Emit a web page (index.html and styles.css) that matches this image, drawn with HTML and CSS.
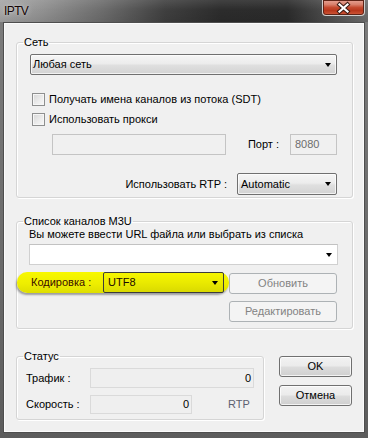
FILE: index.html
```html
<!DOCTYPE html>
<html>
<head>
<meta charset="utf-8">
<title>IPTV</title>
<link rel="stylesheet" href="styles.css">
</head>
<body>
<div class="window">
  <div class="titlebar">
    <span class="title">IPTV</span>
    <div class="close">
      <svg width="41" height="14" viewBox="0 0 41 14">
        <path d="M16.5 3.5 L24.5 10.5 M24.5 3.5 L16.5 10.5" stroke="#3b1b14" stroke-width="4.2" stroke-linecap="square" fill="none"/>
        <path d="M16.5 3.5 L24.5 10.5 M24.5 3.5 L16.5 10.5" stroke="#ffffff" stroke-width="2.2" stroke-linecap="square" fill="none"/>
      </svg>
    </div>
  </div>
  <div class="client">
    <fieldset class="group net">
      <legend>Сеть</legend>
      <div class="combo net-combo"><span>Любая сеть</span><i class="arrow"></i></div>
      <label class="check first"><span class="box"></span>Получать имена каналов из потока (SDT)</label>
      <label class="check second"><span class="box"></span>Использовать прокси</label>
      <div class="proxy-row">
        <div class="field proxy"></div>
        <span class="port-label">Порт :</span>
        <div class="field port">8080</div>
      </div>
      <div class="rtp-row">
        <span>Использовать RTP :</span>
        <div class="combo rtp"><span>Automatic</span><i class="arrow"></i></div>
      </div>
    </fieldset>

    <fieldset class="group m3u">
      <legend>Список каналов M3U</legend>
      <div class="info">Вы можете ввести URL файла или выбрать из списка</div>
      <div class="url-combo"><i class="arrow"></i></div>
      <div class="m3u-grid">
        <div class="highlight">
          <span class="enc-label">Кодировка :</span>
          <div class="combo enc"><span>UTF8</span><i class="arrow"></i></div>
        </div>
        <div class="button disabled refresh">Обновить</div>
        <div class="button disabled edit">Редактировать</div>
      </div>
    </fieldset>

    <div class="bottom">
      <fieldset class="group status">
        <legend>Статус</legend>
        <div class="stat-row">
          <span class="stat-label">Трафик :</span>
          <div class="field stat traffic">0</div>
        </div>
        <div class="stat-row second">
          <span class="stat-label">Скорость :</span>
          <div class="field stat speed">0</div>
          <span class="unit">RTP</span>
        </div>
      </fieldset>
      <div class="actions">
        <div class="button">OK</div>
        <div class="button">Отмена</div>
      </div>
    </div>
  </div>
</div>
</body>
</html>
```

FILE: styles.css
```css
* { box-sizing: border-box; }
html, body { margin: 0; padding: 0; }
body {
  width: 368px;
  height: 438px;
  overflow: hidden;
  font: 11px/13px "Liberation Sans", Arial, sans-serif;
  color: #000;
  background: #5a5a5a;
}

.window {
  width: 368px;
  height: 438px;
  display: flex;
  flex-direction: column;
  padding: 0 3px 5px 3px;
  background: linear-gradient(180deg, #7d7d7d 0%, #6a6a6a 60%, #5c5c5c 100%);
}

.titlebar {
  height: 22px;
  margin: 0 -3px;
  padding: 0 3px 0 3px;
  display: flex;
  justify-content: space-between;
  align-items: flex-start;
  background:
    linear-gradient(180deg, rgba(255,255,255,0.10) 0%, rgba(255,255,255,0) 45%, rgba(0,0,0,0.08) 100%),
    linear-gradient(90deg, #a6a6a6 0%, #909090 12%, #6c6c6c 28%, #3f3f3f 45%, #2c2c2c 60%, #2b2b2b 78%, #4a4a4a 88%, #6f6f6f 100%);
}

.title {
  margin: 4px 0 0 1px;
  font: 12px/14px "Liberation Sans", Arial, sans-serif;
  letter-spacing: -0.6px;
  color: #140404;
  text-shadow: 0 0 6px rgba(255,255,255,0.55), 0 0 2px rgba(255,255,255,0.4);
}

.close {
  width: 43px;
  height: 16px;
  margin-right: 0;
  border: 1px solid #cfcfcf;
  border-top: none;
  border-radius: 0 0 4px 4px;
  display: flex;
  align-items: center;
  justify-content: center;
  background:
    linear-gradient(180deg, #e7a496 0%, #d9806c 30%, #c54a2f 50%, #b8371c 70%, #d05a3b 100%);
  box-shadow: inset 0 0 0 1px #5e2316;
}
.close svg { display: block; }

.client {
  flex: 1;
  background: #f0f0f0;
  border: 1px solid #4e4e4e;
  box-shadow: inset 0 0 0 1px #fbfbfb;
  display: flex;
  flex-direction: column;
}

/* group boxes */
.group {
  margin: 0;
  border: 1px solid #d5d5d5;
  border-radius: 3px;
  box-shadow: inset 1px 1px 0 #ffffff, 1px 1px 0 #ffffff;
  min-width: 0;
}
.group legend {
  padding: 0 1px;
  line-height: 13px;
  font-size: 11px;
  color: #000;
}

.net {
  margin: 13px 0 0 12px;
  width: 337px;
  padding: 5px 15px 2px 13px;
}
.net legend { margin-left: -7px; }

.m3u {
  margin: 17px 0 0 12px;
  width: 337px;
  padding: 0 14px 6px 12px;
}
.m3u legend { margin-left: -6px; }

/* combobox */
.combo {
  height: 21px;
  border: 1px solid #707070;
  border-radius: 2px;
  background: linear-gradient(180deg, #f6f6f6 0%, #ececec 45%, #dfdfdf 55%, #d3d3d3 100%);
  box-shadow: inset 0 0 0 1px rgba(255,255,255,0.7);
  display: flex;
  align-items: center;
  justify-content: space-between;
  padding: 0 5px 0 3px;
}
.arrow {
  display: block;
  width: 0;
  height: 0;
  border-left: 3.5px solid transparent;
  border-right: 3.5px solid transparent;
  border-top: 4px solid #000;
}
.net-combo { width: 307px; padding-left: 2px; }

/* checkboxes */
.check {
  display: flex;
  align-items: center;
  height: 13px;
  padding-left: 2px;
  gap: 4px;
}
.check.first { margin-top: 18px; }
.check.second { margin-top: 7px; }
.box {
  width: 13px;
  height: 13px;
  border: 1px solid #8e8f8f;
  background: linear-gradient(135deg, #d6d6d6 0%, #ededed 60%, #f8f8f8 100%);
  box-shadow: inset 0 0 0 1px #f6f6f6;
}

/* text fields */
.field {
  height: 21px;
  border: 1px solid #c4c4c4;
  background: #f0f0f0;
  color: #6d6d6d;
  display: flex;
  align-items: center;
  padding: 0 3px;
}

.proxy-row {
  margin-top: 8px;
  display: flex;
  align-items: center;
}
.proxy { width: 174px; margin-left: 22px; margin-right: auto; }
.port-label { margin-right: 11px; }
.port { width: 47px; padding-left: 4px; }

.rtp-row {
  margin-top: 18px;
  display: flex;
  align-items: center;
  justify-content: flex-end;
  gap: 10px;
}
.rtp { width: 100px; height: 22px; }

/* M3U */
.info { height: 13px; padding-left: 0; }
.url-combo {
  margin-top: 3px;
  height: 21px;
  width: 309px;
  border: 1px solid #d0d0d0;
  border-top-color: #c2c2c2;
  background: #ffffff;
  display: flex;
  align-items: center;
  justify-content: flex-end;
  padding-right: 5px;
}

.m3u-grid {
  margin-top: 7px;
  display: grid;
  grid-template-columns: 200px 108px;
  column-gap: 0;
}
.highlight {
  grid-row: 1;
  grid-column: 1;
  margin-left: -12px;
  width: 212px;
  height: 21px;
  border-radius: 10px;
  background: linear-gradient(180deg, #f8f800 0%, #eeee00 55%, #dede00 100%);
  box-shadow: -1px 2px 2px rgba(0,0,0,0.35);
  display: flex;
  align-items: center;
}
.enc-label {
  padding-left: 14px;
  color: #3a0c00;
}
.enc {
  margin-left: auto;
  margin-right: 5px;
  width: 121px;
  height: 21px;
  border-color: #3c3c3c;
  background: linear-gradient(180deg, #f6f600 0%, #eaea00 50%, #dada00 100%);
  box-shadow: none;
  padding-left: 4px;
  color: #1a0800;
}

.button {
  height: 21px;
  border: 1px solid #707070;
  border-radius: 3px;
  background: linear-gradient(180deg, #f2f2f2 0%, #ebebeb 48%, #dddddd 52%, #cfcfcf 100%);
  box-shadow: inset 0 0 0 1px rgba(255,255,255,0.75);
  display: flex;
  align-items: center;
  justify-content: center;
}
.button.disabled {
  border-color: #adb2b5;
  background: #f4f4f4;
  box-shadow: none;
  color: #838383;
}
.refresh { grid-row: 1; grid-column: 2; margin-top: 1px; }
.edit { grid-row: 2; grid-column: 2; margin-top: 7px; }

/* bottom */
.bottom {
  margin-top: 21px;
  display: flex;
  align-items: flex-start;
}
.status {
  margin: 0 0 0 12px;
  width: 248px;
  padding: 5px 9px 5px 9px;
}
.status legend { margin-left: -3px; }
.stat-row {
  display: flex;
  align-items: center;
}
.stat-row.second { margin-top: 7px; }
.stat-label { width: 64px; }
.field.stat {
  height: 20px;
  border-color: #dadada;
  background: #efefef;
  color: #000;
  justify-content: flex-end;
  padding-right: 2px;
}
.traffic { width: 164px; }
.speed { width: 102px; height: 19px !important; }
.unit { margin-left: 36px; color: #5d6070; }

.actions {
  margin: 6px 0 0 15px;
  width: 73px;
  display: flex;
  flex-direction: column;
  gap: 8px;
}
```
